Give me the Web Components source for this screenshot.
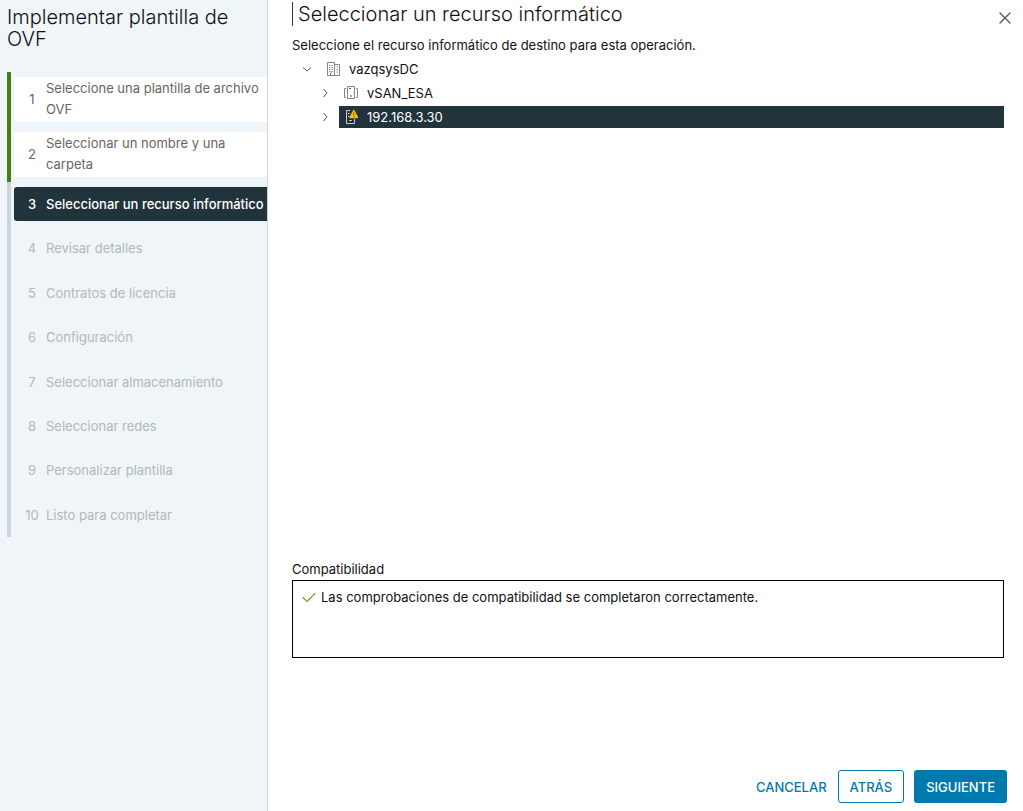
<!DOCTYPE html>
<html lang="es">
<head>
<meta charset="utf-8">
<meta name="viewport" content="width=device-width, initial-scale=1">
<title>Implementar plantilla de OVF</title>
<style>
  :root {
    --navy: #21333b;
    --blue: #0079ad;
    --green: #42810e;
    --rail: #cbd4d8;
    --panel: #eff5f8;
  }
  body {
    margin: 0;
    font-family: Metropolis, Inter, "Liberation Sans", sans-serif;
    font-size: 13px;
    color: #111;
    background: #fff;
  }
</style>
</head>
<body>
<ovf-wizard>
  <span slot="title">Implementar plantilla de OVF</span>
  <wizard-step slot="steps" num="1" state="done">Seleccione una plantilla de archivo OVF</wizard-step>
  <wizard-step slot="steps" num="2" state="done">Seleccionar un nombre y una carpeta</wizard-step>
  <wizard-step slot="steps" num="3" state="current">Seleccionar un recurso informático</wizard-step>
  <wizard-step slot="steps" num="4">Revisar detalles</wizard-step>
  <wizard-step slot="steps" num="5">Contratos de licencia</wizard-step>
  <wizard-step slot="steps" num="6">Configuración</wizard-step>
  <wizard-step slot="steps" num="7">Seleccionar almacenamiento</wizard-step>
  <wizard-step slot="steps" num="8">Seleccionar redes</wizard-step>
  <wizard-step slot="steps" num="9">Personalizar plantilla</wizard-step>
  <wizard-step slot="steps" num="10">Listo para completar</wizard-step>

  <wizard-page heading="Seleccionar un recurso informático">
    <span slot="description">Seleccione el recurso informático de destino para esta operación.</span>
    <inventory-node icon="datacenter" label="vazqsysDC" expanded>
      <inventory-node icon="cluster" label="vSAN_ESA"></inventory-node>
      <inventory-node icon="host" label="192.168.3.30" selected></inventory-node>
    </inventory-node>
    <compat-box slot="compat" label="Compatibilidad">Las comprobaciones de compatibilidad se completaron correctamente.</compat-box>
    <wizard-button slot="actions" kind="link">CANCELAR</wizard-button>
    <wizard-button slot="actions" kind="outline">ATRÁS</wizard-button>
    <wizard-button slot="actions" kind="primary">SIGUIENTE</wizard-button>
  </wizard-page>
</ovf-wizard>

<script>
(function () {
  'use strict';

  // Iconos del árbol, todos en una caja de 16x16
  var ICONS = {
    datacenter: `
      <svg viewBox="0 0 16 16" width="16" height="16" fill="none" stroke="#858585" aria-hidden="true">
        <path d="M2.5 14.5V1.5H9.5V14.5ZM9.5 3.5H14.5V14.5H9.5M5.5 14.5V12H7"/>
        <path d="M4 4.5H8M4 6.5H8M4 8.5H8M4 10.5H8" stroke-dasharray="1.4 1"/>
        <path d="M11.5 6H13M11.5 8.5H13M11.5 11H13"/>
      </svg>`,
    cluster: `
      <svg viewBox="0 0 16 16" width="16" height="16" fill="none" stroke="#858585" aria-hidden="true">
        <path d="M4.5 1.5H11.5V13.5H4.5Z"/>
        <path d="M3 3.5H1.5V12.5H3M13 3.5H14.5V12.5H13"/>
        <path d="M6 3.5H8M8 10V12" stroke="#555"/>
      </svg>`,
    host: `
      <svg viewBox="0 0 16 16" width="16" height="16" fill="none" aria-hidden="true">
        <path d="M7 1.5H3.5V14.5H11.5V10" stroke="#c3ccd0"/>
        <path d="M5 4.5H6.5M5 7.5H6M6.5 11.5H8.5" stroke="#fff"/>
        <path d="M10.4 1.1 6.4 8.1Q6 9.2 7 9.3H14.5Q15.5 9.2 15 8.1L11.3 1.1Q10.8.5 10.4 1.1Z" fill="#fac400"/>
        <path d="M10.8 3.5V6.3M10.8 7.2V8.2" stroke="#5a4700"/>
      </svg>`
  };

  function attach(el, html) {
    var root = el.attachShadow({ mode: 'open' });
    root.innerHTML = html;
    return root;
  }

  /* ---- Contenedor: panel de pasos + página ---- */
  class OvfWizard extends HTMLElement {
    connectedCallback() {
      attach(this, `
        <style>
          :host {
            display: grid;
            grid-template-columns: 267px minmax(0, 1fr);
            min-height: 100vh;
          }
          aside {
            background: var(--panel);
            border-right: 1px solid #ccd6db;
            margin-right: -1px;
          }
          h1 {
            margin: 0;
            padding: 6px 8px 22px 7px;
            font-size: 20px;
            font-weight: 300;
            line-height: 22px;
          }
          nav {
            margin-left: 7px;
          }
          main {
            display: flex;
          }
        </style>
        <aside>
          <h1><slot name="title"></slot></h1>
          <nav aria-label="Pasos"><slot name="steps"></slot></nav>
        </aside>
        <main><slot></slot></main>
      `);
    }
  }

  /* ---- Un paso del asistente: done, current o pendiente ---- */
  class WizardStep extends HTMLElement {
    connectedCallback() {
      var state = this.getAttribute('state');
      attach(this, `
        <style>
          :host {
            display: block;
            border-left: 4px solid var(--rail);
            padding: 5px 0 5px 3px;
          }
          :host([state="done"]) {
            border-left-color: var(--green);
          }
          button {
            display: flex;
            align-items: center;
            gap: 4px;
            width: 100%;
            padding: 7px 0 6px 8px;
            border: 0;
            border-radius: 3px 0 0 3px;
            background: none;
            font: inherit;
            line-height: 1.65;
            text-align: left;
            color: #b2b8bb;
          }
          .num {
            flex: none;
            width: 20px;
            text-align: center;
          }
          :host([state="done"]) button {
            padding-top: 1px;
            padding-bottom: 1px;
            background: #fff;
            color: #666;
          }
          :host([state="current"]) button {
            background: var(--navy);
            color: #fff;
            font-weight: 500;
          }
        </style>
        <button type="button"${state ? '' : ' disabled'}${state === 'current' ? ' aria-current="step"' : ''}>
          <span class="num">${this.getAttribute('num')}</span>
          <span><slot></slot></span>
        </button>
      `);
    }
  }

  /* ---- Página con título, contenido y botonera ---- */
  class WizardPage extends HTMLElement {
    connectedCallback() {
      attach(this, `
        <style>
          :host {
            display: flex;
            flex: 1;
            flex-direction: column;
            min-width: 0;
            padding: 2px 16px 8px 25px;
          }
          header {
            display: flex;
            justify-content: space-between;
            align-items: flex-start;
            margin-right: -6px;
          }
          h2 {
            margin: 0;
            padding-left: 5px;
            border-left: 1px solid #333;
            font-size: 20px;
            font-weight: 300;
            line-height: 24px;
          }
          .close {
            display: flex;
            margin-top: 8px;
            padding: 0;
            border: 0;
            background: none;
          }
          p {
            margin: 9px 0 1px;
            line-height: 20px;
          }
          .tree {
            flex: 1;
            margin-right: 3px;
          }
          footer {
            display: flex;
            justify-content: flex-end;
            gap: 10px;
            padding-top: 112px;
          }
        </style>
        <header>
          <h2>${this.getAttribute('heading')}</h2>
          <button class="close" type="button" aria-label="Cerrar">
            <svg viewBox="0 0 16 16" width="16" height="16" fill="none" stroke="#44565e" stroke-width="1.2" stroke-linecap="round" aria-hidden="true">
              <path d="M3 3 13 13M13 3 3 13"/>
            </svg>
          </button>
        </header>
        <p><slot name="description"></slot></p>
        <div class="tree" role="tree"><slot></slot></div>
        <slot name="compat"></slot>
        <footer><slot name="actions"></slot></footer>
      `);
    }
  }

  /* ---- Nodo del inventario; los hijos van en el slot ---- */
  class InventoryNode extends HTMLElement {
    connectedCallback() {
      var open = this.hasAttribute('expanded');
      var chevron = open ? 'M4 6.5 8 10 12 6.5' : 'M6.5 4 10 8 6.5 12';
      this.setAttribute('role', 'treeitem');
      attach(this, `
        <style>
          :host {
            display: block;
            margin-top: 2px;
          }
          .row {
            display: flex;
            gap: 6px;
            padding-left: 7px;
          }
          button {
            display: flex;
            align-items: center;
            height: 22px;
            padding: 0;
            border: 0;
            background: none;
            font: inherit;
            color: inherit;
          }
          .node {
            flex: 1;
            gap: 8px;
            padding-left: 4px;
          }
          :host([selected]) .node {
            background: var(--navy);
            color: #fff;
          }
          .children {
            margin-left: 18px;
          }
        </style>
        <div class="row">
          <button type="button" aria-label="${open ? 'Contraer' : 'Expandir'}">
            <svg viewBox="0 0 16 16" width="16" height="16" fill="none" stroke="#565656" aria-hidden="true">
              <path d="${chevron}"/>
            </svg>
          </button>
          <button class="node" type="button">
            ${ICONS[this.getAttribute('icon')]}
            <span>${this.getAttribute('label')}</span>
          </button>
        </div>
        <div class="children" role="group"><slot></slot></div>
      `);
    }
  }

  /* ---- Resultado de la comprobación de compatibilidad ---- */
  class CompatBox extends HTMLElement {
    connectedCallback() {
      attach(this, `
        <style>
          :host {
            display: block;
            margin-right: 3px;
          }
          h3 {
            margin: 0;
            font-size: 13px;
            font-weight: 400;
            line-height: 22px;
          }
          .box {
            display: flex;
            align-items: flex-start;
            gap: 4px;
            min-height: 60px;
            padding: 8px;
            border: 1px solid #000;
            line-height: 16px;
          }
        </style>
        <h3>${this.getAttribute('label')}</h3>
        <div class="box" role="status">
          <svg viewBox="0 0 16 16" width="16" height="16" fill="none" stroke="#62a420" stroke-width="1.1" stroke-linecap="round" aria-hidden="true">
            <path d="M2 8.5 6 12.5 14 4.5"/>
          </svg>
          <span><slot></slot></span>
        </div>
      `);
    }
  }

  class WizardButton extends HTMLElement {
    connectedCallback() {
      attach(this, `
        <style>
          :host {
            display: block;
          }
          button {
            height: 33px;
            padding: 0 11px;
            border: 1px solid transparent;
            border-radius: 3px;
            background: none;
            color: var(--blue);
            font: inherit;
            font-weight: 500;
          }
          :host([kind="link"]) button {
            padding: 0;
          }
          :host([kind="outline"]) button {
            border-color: var(--blue);
          }
          :host([kind="primary"]) button {
            background: var(--blue);
            color: #fff;
          }
        </style>
        <button type="button"><slot></slot></button>
      `);
    }
  }

  customElements.define('ovf-wizard', OvfWizard);
  customElements.define('wizard-step', WizardStep);
  customElements.define('wizard-page', WizardPage);
  customElements.define('inventory-node', InventoryNode);
  customElements.define('compat-box', CompatBox);
  customElements.define('wizard-button', WizardButton);
})();
</script>
</body>
</html>
